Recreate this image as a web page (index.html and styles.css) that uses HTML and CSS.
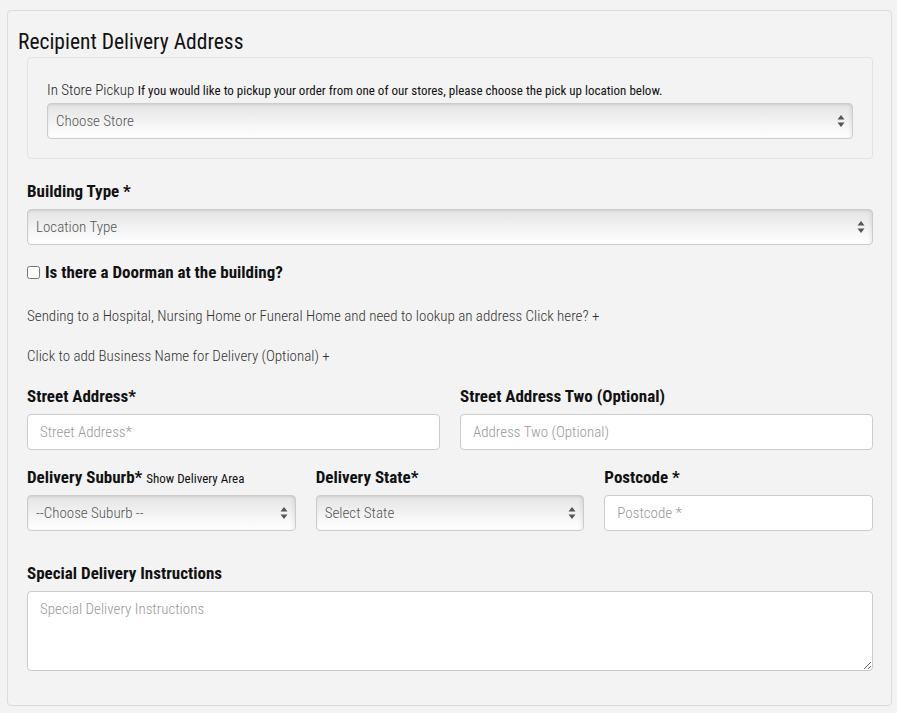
FILE: index.html
```html
<!DOCTYPE html>
<html lang="en">
<head>
  <meta charset="UTF-8">
  <meta name="viewport" content="width=device-width, initial-scale=1.0">
  <title>Recipient Delivery Address</title>
<link rel="stylesheet" href="styles.css">
</head>
<body>
  <div class="panel">
    <h2 class="title">Recipient Delivery Address</h2>

    <!-- in store pickup -->
    <div class="well">
      <p class="pickup-label">In Store Pickup <span>If you would like to pickup your order from one of our stores, please choose the pick up location below.</span></p>
      <div class="select-wrap">
        <select class="field select">
          <option>Choose Store</option>
        </select>
        <svg class="arrows" width="8" height="12" viewBox="0 0 8 12"><path d="M4 0L7.5 4.5H0.5Z M4 12L7.5 7.5H0.5Z" fill="#555"/></svg>
      </div>
    </div>

    <label class="lbl lbl-building">Building Type *</label>
    <div class="select-wrap">
      <select class="field select">
        <option>Location Type</option>
      </select>
      <svg class="arrows" width="8" height="12" viewBox="0 0 8 12"><path d="M4 0L7.5 4.5H0.5Z M4 12L7.5 7.5H0.5Z" fill="#555"/></svg>
    </div>

    <label class="check-row">
      <input type="checkbox" class="check">
      <span class="lbl">Is there a Doorman at the building?</span>
    </label>

    <p class="link-line link-first">Sending to a Hospital, Nursing Home or Funeral Home and need to lookup an address Click here? +</p>
    <p class="link-line">Click to add Business Name for Delivery (Optional) +</p>

    <div class="row row-2">
      <div class="col">
        <label class="lbl">Street Address*</label>
        <input type="text" class="field" placeholder="Street Address*">
      </div>
      <div class="col">
        <label class="lbl">Street Address Two (Optional)</label>
        <input type="text" class="field" placeholder="Address Two (Optional)">
      </div>
    </div>

    <div class="row row-3">
      <div class="col">
        <label class="lbl">Delivery Suburb* <small>Show Delivery Area</small></label>
        <div class="select-wrap">
          <select class="field select">
            <option>--Choose Suburb --</option>
          </select>
          <svg class="arrows" width="8" height="12" viewBox="0 0 8 12"><path d="M4 0L7.5 4.5H0.5Z M4 12L7.5 7.5H0.5Z" fill="#555"/></svg>
        </div>
      </div>
      <div class="col">
        <label class="lbl">Delivery State*</label>
        <div class="select-wrap">
          <select class="field select">
            <option>Select State</option>
          </select>
          <svg class="arrows" width="8" height="12" viewBox="0 0 8 12"><path d="M4 0L7.5 4.5H0.5Z M4 12L7.5 7.5H0.5Z" fill="#555"/></svg>
        </div>
      </div>
      <div class="col">
        <label class="lbl">Postcode *</label>
        <input type="text" class="field" placeholder="Postcode *">
      </div>
    </div>

    <label class="lbl lbl-special">Special Delivery Instructions</label>
    <textarea class="field area" placeholder="Special Delivery Instructions"></textarea>
  </div>
</body>
</html>
```

FILE: styles.css
```css
*{margin: 0;padding: 0;box-sizing: border-box;}
body{
  background: #f3f3f3;
  padding: 10px 5px 0 7px;
  font-family: "Roboto Condensed", Roboto, "Liberation Sans", sans-serif;
  font-stretch: condensed;
  color: #222;
}
.panel{
  border: 1px solid #dcdcdc;
  border-radius: 4px;
  background: #f3f3f3;
  padding: 17px 18px 34px 19px;
}
.panel .title{
  font-size: 21.5px;
  line-height: 28px;
  font-weight: 400;
  color: #111;
  margin: 0 0 1px -9px;
}
.well{
  border: 1px solid #e2e2e2;
  border-radius: 4px;
  padding: 22px 19px 19px 19px;
}
.pickup-label{
  font-size: 15px;
  font-weight: 300;
  line-height: 20px;
  color: #222;
  margin-bottom: 2px;
}
.pickup-label span{
  font-size: 13px;
  font-weight: 400;
  color: #111;
}
.lbl{
  display: block;
  font-size: 17px;
  line-height: 20px;
  font-weight: 700;
  color: #111;
  margin-bottom: 8px;
}
.lbl small{
  font-size: 13px;
  line-height: 1;
  font-weight: 400;
}
.lbl-building{margin-top: 22px;}
.lbl-special{margin-top: 32px;}

.field{
  display: block;
  width: 100%;
  height: 36px;
  border: 1px solid #ccc;
  border-radius: 4px;
  background: #fff;
  font-family: inherit;
  font-stretch: condensed;
  font-size: 15px;
  font-weight: 300;
  color: #555;
  padding: 0 12px;
  outline: none;
}
.field::placeholder{color: #999;}
.select{
  -webkit-appearance: none;
  appearance: none;
  background: linear-gradient(#e4e4e4, #f6f6f6 65%, #fff);
  box-shadow: inset 0 1px 2px rgba(0,0,0,0.08), inset -3px 0 3px rgba(0,0,0,0.04);
  padding: 0 8px;
  color: #555;
}
.select-wrap{position: relative;}
.select-wrap .arrows{
  position: absolute;
  right: 8px;
  top: 12px;
  pointer-events: none;
}
.area{
  height: 80px;
  padding: 8px 12px;
  resize: vertical;
}

.check-row{
  display: flex;
  align-items: center;
  margin-top: 17px;
}
.check-row .check{
  width: 13px;height: 13px;
  margin: 0 5px 0 0;
}
.check-row .lbl{margin-bottom: 0;}

.link-line{
  font-size: 15px;
  line-height: 20px;
  font-weight: 300;
  color: #333;
  margin-top: 20px;
}
.link-first{margin-top: 24px;}

.row{
  display: grid;
  column-gap: 20px;
  margin-top: 20px;
}
.row-2{grid-template-columns: 1fr 1fr;}
.row-3{grid-template-columns: 1fr 1fr 1fr;margin-top: 17px;}
```
